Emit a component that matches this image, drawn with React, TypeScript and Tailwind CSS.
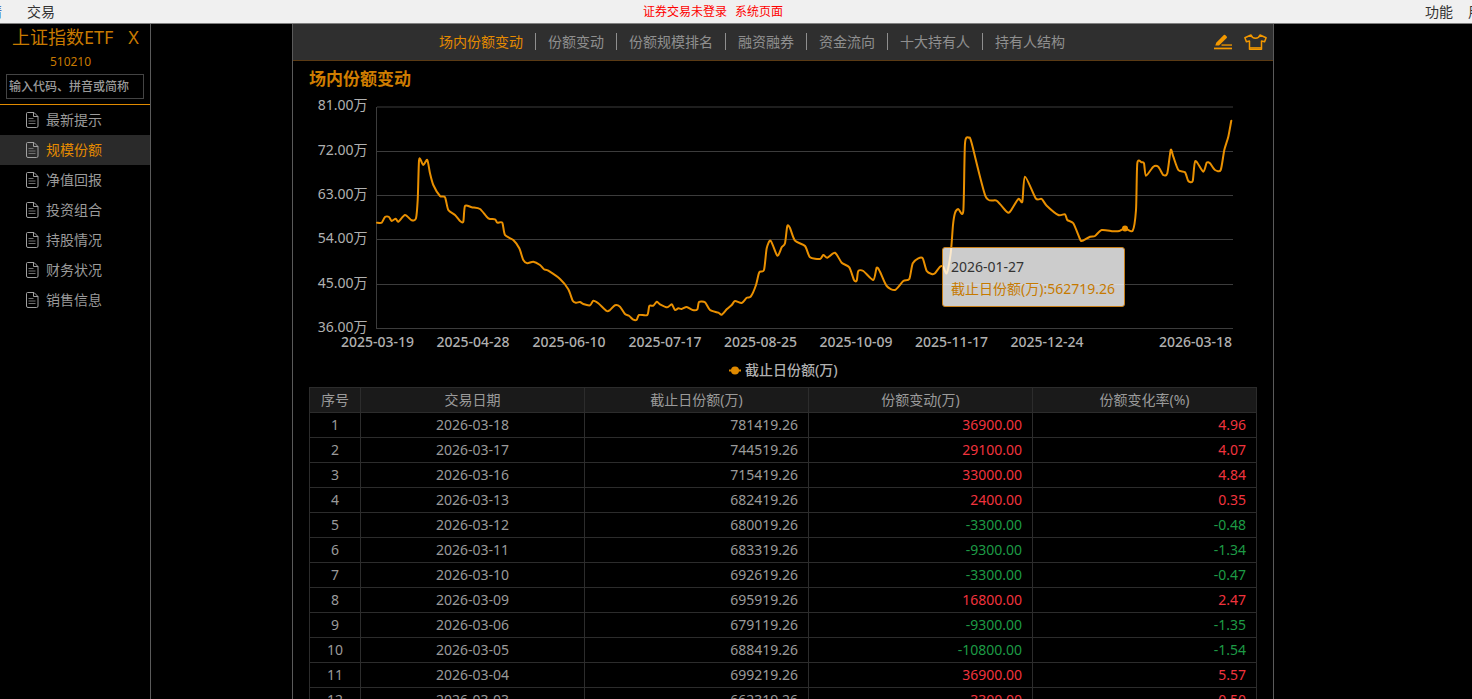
const FONT = '"Noto Sans","Noto Sans CJK SC",sans-serif';

const pts: [number, number][] = [
[377,222.7],[381.7,222.7],[385,217],[389,217],[391.7,221],[395.7,218.7],[398.3,221.7],[405,215],[411.7,220.3],[416,218.3],[417.7,200],[419,160.7],[420.7,160],[423.3,165],[427.3,160],[430,173.3],[433.3,185],[440,196],[445,197.3],[448.3,210],[455,215],[460,221],[463.3,221.7],[465,206],[471.7,207.3],[480,209],[488.3,218.3],[495,219.3],[497.3,222.7],[502.3,222.7],[505,235],[513.3,240],[519.3,248.3],[523.3,260],[527.3,263.3],[533.3,261.7],[540,265],[544,269.3],[548.3,270.7],[560,279],[568.3,289.3],[572.7,300.7],[576,302.7],[580,302],[583.3,304],[590,305.3],[593.3,300.7],[598.3,303.3],[606.7,311],[610,310],[615,305.3],[620,306.7],[625,314],[629.3,316],[633.3,319.7],[636.7,319.7],[639,315],[647.3,315],[649.3,306],[653.3,305.7],[656.7,301.7],[660,304.3],[667.3,307.3],[671.7,304.3],[675,310],[678.3,308.3],[681.7,309],[686.7,307],[692.7,310],[697.3,309.3],[699,302],[705,302.3],[710,310],[718.3,312.7],[721.7,314.7],[726.7,309.3],[731.7,305],[735,301],[741.7,303],[746.7,297.7],[750.7,296.7],[756,285],[759.3,272.3],[764,270],[766.7,248.3],[770.7,240.7],[777.3,255.7],[781.7,247.3],[785,243.3],[787.3,226],[790,228],[795,240.7],[805,246],[810,257.3],[820,259],[823.3,255],[827.3,257.7],[835,252.7],[841.7,262.7],[849.3,267.3],[854,280],[856.7,280.7],[858.3,271],[863.3,271],[873.3,280],[876.7,267.7],[880,271.7],[886.7,286],[895,290],[903.3,281],[909.3,279],[912.7,263.3],[918.3,258.3],[922.7,258.3],[926.7,271],[931.7,274],[935,273.3],[940,266.7],[943.3,266.7],[946.7,273.3],[950.7,253.3],[953,225],[955,213],[958.3,209],[963.3,211],[965,143.3],[969,137.7],[971.7,143.3],[985.7,196.7],[996.7,200.7],[1006.7,211.7],[1010,211.7],[1018.3,199],[1022.3,201.7],[1025,176.7],[1035.7,198.3],[1041.7,199],[1046.7,205.7],[1058.3,215],[1065,214.3],[1067.3,220],[1073.3,223.3],[1080,239],[1081.7,241],[1090,236.7],[1095,236],[1101.7,230],[1113.3,231.3],[1119.3,231],[1125,228.3],[1132.7,230.7],[1136,210],[1137.3,163.3],[1141.7,162.3],[1144,163.3],[1146,175.7],[1153.3,166.7],[1158.3,166.7],[1163.3,175],[1167.3,173.3],[1170.7,150],[1173.3,156.7],[1178.3,170],[1185,172.3],[1188.3,181],[1192.7,181],[1195.3,161],[1203.3,171.7],[1206.7,162.7],[1210,163.3],[1215,170],[1220.7,170],[1224.3,150],[1228.3,136.7],[1231.3,120.7],
];

function smooth(p: [number, number][]): string {
  let d = `M${p[0][0]} ${p[0][1]}`;
  for (let i = 0; i < p.length - 1; i++) {
    const a = p[Math.max(i - 1, 0)], b = p[i], c = p[i + 1], e = p[Math.min(i + 2, p.length - 1)];
    const k = 0.12;
    d += `C${(b[0] + (c[0] - a[0]) * k).toFixed(1)} ${(b[1] + (c[1] - a[1]) * k).toFixed(1)} ${(c[0] - (e[0] - b[0]) * k).toFixed(1)} ${(c[1] - (e[1] - b[1]) * k).toFixed(1)} ${c[0]} ${c[1]}`;
  }
  return d;
}

const X0 = 309;
const Y0 = 95;
const yTicks = [["81.00万", 107], ["72.00万", 151.5], ["63.00万", 195.5], ["54.00万", 239.5], ["45.00万", 284.5], ["36.00万", 328.5]] as const;
const xTicks = [["2025-03-19", 377.5], ["2025-04-28", 473], ["2025-06-10", 569], ["2025-07-17", 665], ["2025-08-25", 760.5], ["2025-10-09", 856], ["2025-11-17", 951.5], ["2025-12-24", 1047], ["2026-03-18", 1195.5]] as const;

function Chart() {
  return (
    <svg width="948" height="288" viewBox={`${X0} ${Y0} 948 288`} className="block" fontFamily={FONT}>
      {yTicks.map(([t, y]) => (
        <g key={t}>
          <line x1="377" x2="1233" y1={y} y2={y} stroke="#3c3c3c" />
          <text x="367.5" y={y + 3} textAnchor="end" fontSize="14" fill="#b0b0b0">{t}</text>
        </g>
      ))}
      <line x1="376.5" x2="376.5" y1="107" y2="329" stroke="#3c3c3c" />
      {xTicks.map(([t, x]) => (
        <text key={t} x={x} y={347} textAnchor="middle" fontSize="14" fontWeight="500" fill="#b0b0b0">{t}</text>
      ))}
      <path d={smooth(pts)} fill="none" stroke="#ea9000" strokeWidth="2" strokeLinejoin="round" strokeLinecap="round" />
      <circle cx="1125" cy="228.5" r="3" fill="#ea9000" />
      <line x1="729" x2="741" y1="370.5" y2="370.5" stroke="#e08a00" strokeWidth="2" />
      <circle cx="735" cy="370.5" r="4" fill="#e08a00" />
      <text x="745" y="375" fontSize="14" fontWeight="500" fill="#b0b0b0">截止日份额(万)</text>
    </svg>
  );
}

function PenIcon() {
  return (
    <svg width="18" height="16" viewBox="0 0 18 16" fill="#f39800">
      <path d="M2.200 8.800 9.800 1.100a1 1 0 0 1 1.400 0l1.500 1.500a1 1 0 0 1 0 1.400L5 11.600H1.300z" />
      <rect x="7.500" y="10.400" width="10.500" height="1.300" />
      <rect x="0" y="13.600" width="18" height="1.700" />
    </svg>
  );
}

function ShirtIcon() {
  return (
    <svg width="23" height="16" viewBox="0 0 23 16" fill="none" stroke="#f39800" strokeWidth="1.500" strokeLinejoin="round">
      <path d="M7 1 .9 3.700l1.500 4.100 3.100-.7V15.200h12V7.100l3.100.7 1.500-4.100L16 1c-.8 2.400-2.500 3.200-4.500 3.200S7.800 3.400 7 1z" />
      <path d="M5.500 13.900h12" />
    </svg>
  );
}

function DocIcon() {
  return (
    <svg width="14" height="16" viewBox="0 0 14 16" fill="none" stroke="#a0a0a0" strokeWidth="1" className="shrink-0">
      <path d="M1.500 1.500a1 1 0 0 1 1-1h6.500l4 4v9.500a1.500 1.500 0 0 1-1.500 1.500h-8.500a1.500 1.500 0 0 1-1.500-1.500z" />
      <path d="M8.500 .8v3.700h4.500" />
      <path d="M3.500 6.500h5M3.500 9h7M3.500 11.500h7" stroke="#707070" />
    </svg>
  );
}

const menu = ["最新提示", "规模份额", "净值回报", "投资组合", "持股情况", "财务状况", "销售信息"];
const tabs = ["场内份额变动", "份额变动", "份额规模排名", "融资融券", "资金流向", "十大持有人", "持有人结构"];

const rows: [string, string, string, string, string][] = [
  ["1", "2026-03-18", "781419.26", "36900.00", "4.96"],
  ["2", "2026-03-17", "744519.26", "29100.00", "4.07"],
  ["3", "2026-03-16", "715419.26", "33000.00", "4.84"],
  ["4", "2026-03-13", "682419.26", "2400.00", "0.35"],
  ["5", "2026-03-12", "680019.26", "-3300.00", "-0.48"],
  ["6", "2026-03-11", "683319.26", "-9300.00", "-1.34"],
  ["7", "2026-03-10", "692619.26", "-3300.00", "-0.47"],
  ["8", "2026-03-09", "695919.26", "16800.00", "2.47"],
  ["9", "2026-03-06", "679119.26", "-9300.00", "-1.35"],
  ["10", "2026-03-05", "688419.26", "-10800.00", "-1.54"],
  ["11", "2026-03-04", "699219.26", "36900.00", "5.57"],
  ["12", "2026-03-03", "662319.26", "3300.00", "0.50"],
];

function DataTable() {
  const head = ["序号", "交易日期", "截止日份额(万)", "份额变动(万)", "份额变化率(%)"];
  return (
    <table className="w-[947px] table-fixed border-collapse text-sm text-[#9a9a9a]">
      <colgroup>
        <col className="w-[51px]" />
        <col className="w-[224px]" />
        <col className="w-[224px]" />
        <col className="w-[224px]" />
        <col className="w-[224px]" />
      </colgroup>
      <thead>
        <tr className="h-[25px] bg-[#1a1a1a]">
          {head.map((h) => (
            <th key={h} className="border border-[#2c2c2c] p-0 font-normal leading-none text-[#9a9a9a]">{h}</th>
          ))}
        </tr>
      </thead>
      <tbody>
        {rows.map((r) => {
          const color = r[3].startsWith("-") ? "text-[#1d9a45]" : "text-[#f0333d]";
          return (
            <tr key={r[0]} className="h-[25px]">
              <td className="border border-[#2c2c2c] p-0 text-center leading-none">{r[0]}</td>
              <td className="border border-[#2c2c2c] p-0 text-center leading-none">{r[1]}</td>
              <td className="border border-[#2c2c2c] p-0 pr-2.5 text-right leading-none">{r[2]}</td>
              <td className={`border border-[#2c2c2c] p-0 pr-2.5 text-right leading-none ${color}`}>{r[3]}</td>
              <td className={`border border-[#2c2c2c] p-0 pr-2.5 text-right leading-none ${color}`}>{r[4]}</td>
            </tr>
          );
        })}
      </tbody>
    </table>
  );
}

export default function App() {
  return (
    <div className="flex h-[699px] w-[1472px] flex-col overflow-hidden bg-black" style={{ fontFamily: FONT }}>
      <div className="flex h-6 shrink-0 items-center overflow-hidden border-b border-[#808080] bg-[#f0f0f0] text-sm leading-none text-[#333]">
        <span className="ml-[-12px] w-[39px] shrink-0 text-[#1f4fa8]">情</span>
        <span>交易</span>
        <div className="ml-[588px] flex flex-1 gap-2 text-xs text-[#ff0000]">
          <span>证券交易未登录</span>
          <span>系统页面</span>
        </div>
        <span className="mr-[1px]">功能</span>
        <span className="ml-[14px] mr-[-10px] w-[14px] shrink-0">用</span>
      </div>
      <div className="flex min-h-0 flex-1">
        <aside className="flex w-[151px] shrink-0 flex-col border-r border-[#5a5a5a]">
          <div className="flex h-[26px] items-center pl-3 text-[18px] leading-none text-[#c87a00]">
            <span>上证指数ETF</span>
            <span className="ml-[15px]">X</span>
          </div>
          <div className="mt-[3px] w-[141px] text-center text-xs leading-[18px] text-[#c87a00]">510210</div>
          <div className="ml-[6px] mt-[3px] flex h-[25px] w-[138px] items-center border border-[#444] pl-[2px] text-xs font-medium text-[#9a9a9a]">输入代码、拼音或简称</div>
          <div className="mt-[5px] h-px bg-[#e08a00]" />
          {menu.map((m, i) => (
            <div key={m} className={`flex h-[30px] items-center gap-[7px] pl-[25px] text-sm ${i === 1 ? "bg-[#2a2a2a] text-[#e58a00]" : "text-[#9a9a9a]"}`}>
              <DocIcon />
              <span>{m}</span>
            </div>
          ))}
        </aside>
        <main className="ml-[141px] flex h-full w-[982px] shrink-0 flex-col border-x border-[#5a5a5a]">
          <div className="relative flex h-[37px] shrink-0 items-center justify-center border-b border-[#5a3a14] bg-[#2f2f2f] pb-[2px] pr-[62px] text-sm text-[#8f8f8f]">
            <div className="flex items-center">
              {tabs.map((t, i) => (
                <span key={t} className={`px-3 leading-[17px] ${i > 0 ? "border-l border-[#8f8f8f]" : ""} ${i === 0 ? "text-[#e58a00]" : ""}`}>{t}</span>
              ))}
            </div>
            <div className="absolute right-[6px] top-[10px] flex items-center gap-[12px]">
              <PenIcon />
              <ShirtIcon />
            </div>
          </div>
          <div className="relative flex flex-col px-4">
            <h2 className="mt-[6px] h-[28px] text-[17px] font-bold leading-[24px] text-[#cf7d00]">场内份额变动</h2>
            <Chart />
            <div className="absolute left-[649px] top-[186px] flex h-[60px] w-[183px] flex-col justify-center rounded-[3px] border border-[#c77f1a] bg-white/80 pl-2 pt-px text-sm leading-[22px]">
              <span className="text-[#333]">2026-01-27</span>
              <span className="text-[#c67a00]">截止日份额(万):562719.26</span>
            </div>
            <div className="mt-[4px]"><DataTable /></div>
          </div>
        </main>
      </div>
    </div>
  );
}
